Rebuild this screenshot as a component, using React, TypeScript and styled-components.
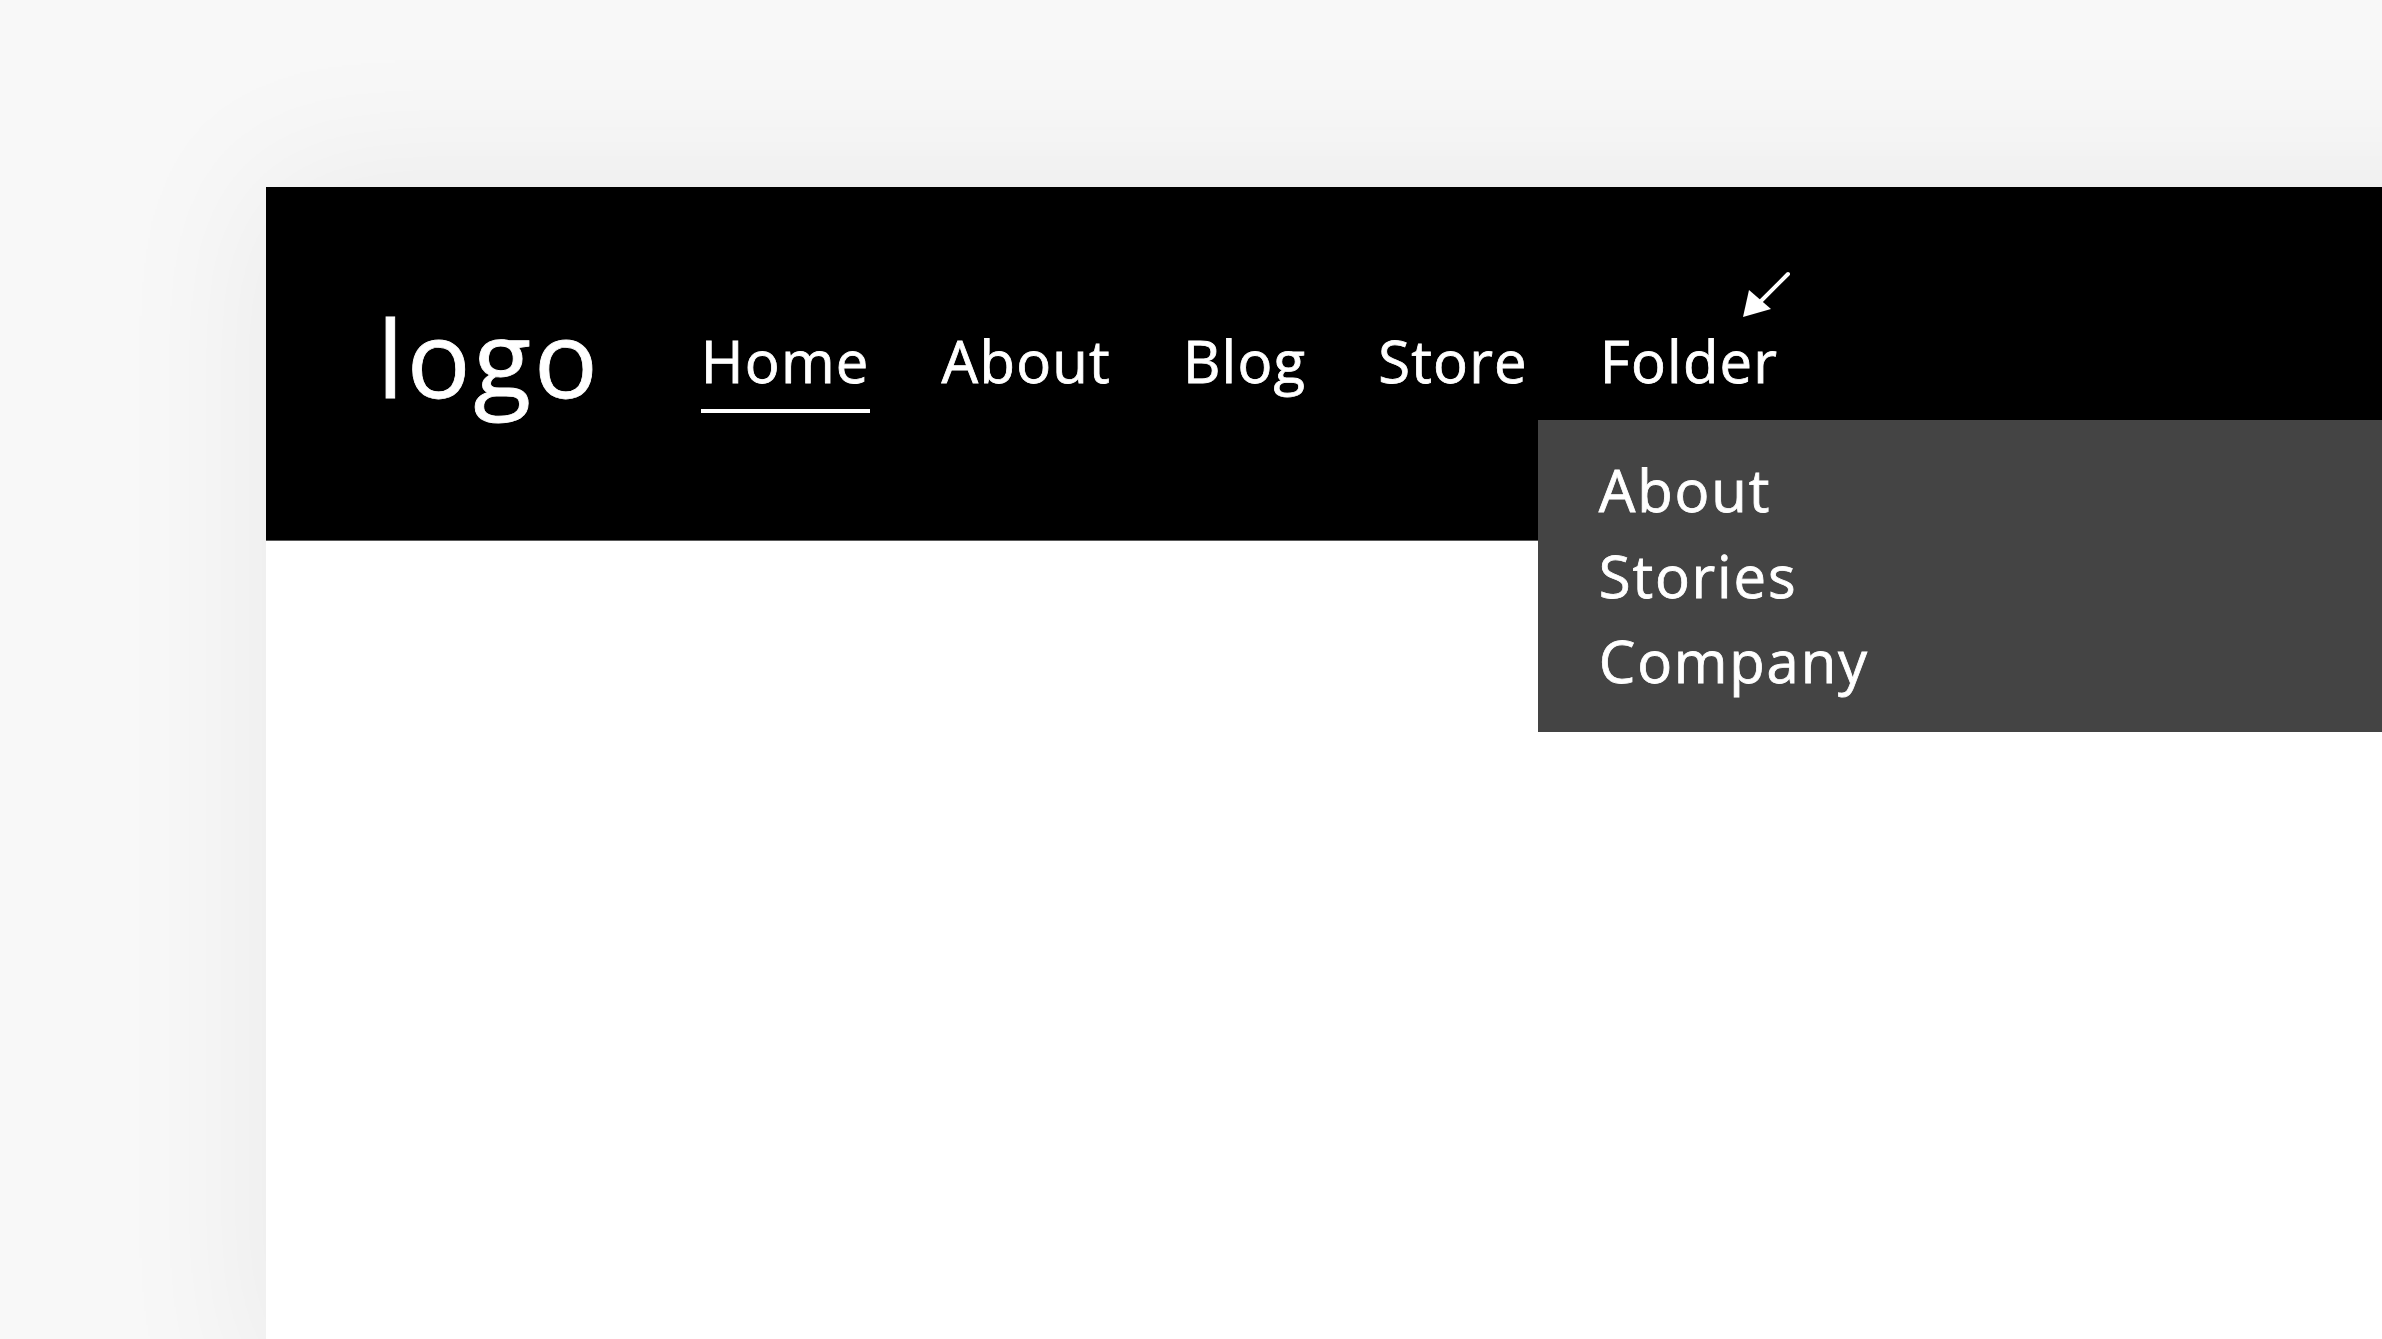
import React from 'react';
import styled, { createGlobalStyle } from 'styled-components';

const GlobalStyle = createGlobalStyle`
  html, body {
    margin: 0;
    padding: 0;
    background: #f8f8f8;
    overflow: hidden;
  }
  body {
    font-family: "Open Sans", "Noto Sans", sans-serif;
  }
`;

const Stage = styled.div`
  width: 2382px;
  height: 1339px;
  overflow: hidden;
  background: #f8f8f8;
  padding: 187px 0 0 266px;
  box-sizing: border-box;
`;

const Page = styled.div`
  width: 2300px;
  height: 1200px;
  background: #ffffff;
  box-shadow: 0 0 150px 10px rgba(0, 0, 0, 0.06);
`;

const Header = styled.header`
  height: 354px;
  box-sizing: border-box;
  background: #000;
  border-bottom: 1px solid #5a5a5a;
  display: flex;
  align-items: flex-start;
  padding-left: 111px;
  color: #fff;
  -webkit-text-stroke: 0.8px #fff;
`;

const Logo = styled.div`
  font-size: 106px;
  line-height: 105px;
  margin-top: 118px;
  letter-spacing: 3px;
`;

const Nav = styled.nav`
  display: flex;
  gap: 72px;
  margin-top: 134px;
  margin-left: 100px;
`;

const NavItem = styled.div<{ $active?: boolean }>`
  position: relative;
  font-size: 58px;
  line-height: 80px;
  letter-spacing: 1.2px;
  padding-bottom: 8px;
  border-bottom: 4px solid ${(p) => (p.$active ? '#fff' : 'transparent')};
  white-space: nowrap;
`;

const Dropdown = styled.div`
  position: absolute;
  left: -62px;
  top: 99px;
  width: 900px;
  box-sizing: border-box;
  padding: 27px 0 28px 61px;
  background: #444444;
  display: flex;
  flex-direction: column;
`;

const DropItem = styled.div`
  font-size: 58px;
  line-height: 85.5px;
  letter-spacing: 1.8px;
  color: #fff;
`;

const Pointer = styled.svg`
  position: absolute;
  left: 138px;
  top: -56px;
  width: 60px;
  height: 60px;
`;

const App: React.FC = () => {
  return (
    <>
      <GlobalStyle />
      <Stage>
        <Page>
          <Header>
            <Logo>logo</Logo>
            <Nav>
              <NavItem $active>Home</NavItem>
              <NavItem>About</NavItem>
              <NavItem>Blog</NavItem>
              <NavItem>Store</NavItem>
              <NavItem>
                Folder
                <Pointer viewBox="0 0 60 60">
                  <line x1="50" y1="9" x2="18" y2="41" stroke="#fff" strokeWidth="4" strokeLinecap="round" />
                  <polygon points="5,52 11,25 33,44" fill="#fff" />
                </Pointer>
                <Dropdown>
                  <DropItem>About</DropItem>
                  <DropItem>Stories</DropItem>
                  <DropItem>Company</DropItem>
                </Dropdown>
              </NavItem>
            </Nav>
          </Header>
        </Page>
      </Stage>
    </>
  );
};

export default App;
